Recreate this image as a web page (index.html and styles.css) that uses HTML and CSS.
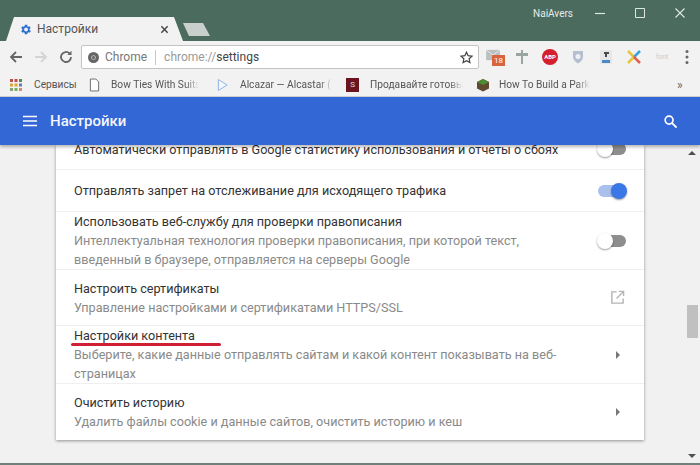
FILE: index.html
```html
<!DOCTYPE html>
<html lang="ru">
<head>
<meta charset="utf-8">
<title>Настройки</title>
<link rel="stylesheet" href="styles.css">
</head>
<body>
<div class="window">
  <div class="titlebar">
    <div class="tab">
      <svg class="tab-icon" viewBox="0 0 24 24"><path fill="#2f6fd0" d="M19.400 13a7.500 7.500 0 0 0 0-2l2.100-1.600-2-3.400-2.500 1a7.600 7.600 0 0 0-1.700-1L15.300 3.300h-4.600l-.4 2.700a7.600 7.600 0 0 0-1.700 1l-2.500-1-2 3.400L6.200 11a7.500 7.500 0 0 0 0 2l-2.100 1.600 2 3.400 2.500-1a7.600 7.600 0 0 0 1.700 1l.4 2.700h4.600l.4-2.700a7.600 7.600 0 0 0 1.700-1l2.500 1 2-3.400zM13 15.500a3.500 3.500 0 1 1 0-7 3.500 3.500 0 0 1 0 7z"/></svg>
      <span class="tab-title">Настройки</span>
      <svg class="tab-close" viewBox="0 0 10 10"><path d="M1.500 1.500l7 7M8.500 1.500l-7 7" stroke="#444" stroke-width="1.600" fill="none"/></svg>
    </div>
    <div class="newtab"></div>
    <div class="title-spacer"></div>
    <span class="user">NaiAvers</span>
    <div class="winctl">
      <svg viewBox="0 0 12 12"><path d="M1 6.500h10" stroke="#dfe8e4" stroke-width="1.200"/></svg>
      <svg viewBox="0 0 12 12"><path d="M1.500 1.500h9v9h-9z" stroke="#dfe8e4" stroke-width="1" fill="none"/></svg>
      <svg viewBox="0 0 12 12"><path d="M1.500 1.500l9 9M10.500 1.500l-9 9" stroke="#dfe8e4" stroke-width="1.100"/></svg>
    </div>
  </div>
  <div class="toolbar">
    <svg class="nav" viewBox="0 0 16 16"><path d="M14 8H3M8 3L3 8l5 5" stroke="#666" stroke-width="1.800" fill="none"/></svg>
    <svg class="nav" viewBox="0 0 16 16"><path d="M2 8h11M8 3l5 5-5 5" stroke="#d4d4d4" stroke-width="1.800" fill="none"/></svg>
    <svg class="nav" viewBox="0 0 16 16"><path d="M13 8a5 5 0 1 1-1.500-3.600" stroke="#666" stroke-width="1.800" fill="none"/><path d="M13.500 1.800v4.200H9.300z" fill="#666"/></svg>
    <div class="omnibox">
      <span class="site-icon"></span>
      <span class="chip">Chrome</span>
      <span class="omni-sep"></span>
      <span class="url"><span class="url-dim">chrome://</span>settings</span>
      <svg class="star" viewBox="0 0 24 24"><path d="M12 3.500l2.600 5.600 6.100.7-4.500 4.200 1.200 6L12 17l-5.400 3 1.200-6-4.500-4.200 6.100-.7z" stroke="#444" stroke-width="2" fill="none"/></svg>
    </div>
    <div class="exts">
      <span class="ext ext-mail"><svg viewBox="0 0 16 14"><path d="M0 1h16v12H0z" fill="#b9c0c0"/><path d="M0 1l8 6 8-6" stroke="#eee" fill="none"/></svg><span class="badge">18</span></span>
      <svg class="ext" viewBox="0 0 16 16"><path d="M7 1h2v3h5v3H9v8H7V7H2V4h5z" fill="#9aa5a2"/></svg>
      <span class="ext abp">ABP</span>
      <svg class="ext" viewBox="0 0 16 16"><path d="M3 2h10v6c0 3-2.500 5-5 6.500C5.500 13 3 11 3 8z" fill="#b5bfd0"/><circle cx="8" cy="7.500" r="2.500" fill="#eef0f3"/></svg>
      <svg class="ext" viewBox="0 0 16 16"><path d="M2 1h12v14H2z" fill="#e6e6e6"/><path d="M6 3h5v2H9v3H7V5H6z" fill="#4a4a4a"/><path d="M4 11h8v3H4z" fill="#4a8ac8"/></svg>
      <svg class="ext" viewBox="0 0 16 16"><path d="M2 2l6 6-6 6" stroke="#e8c43c" stroke-width="2.500" fill="none"/><path d="M14 2L8 8" stroke="#3aa4d8" stroke-width="2.500"/><path d="M14 14L8 8" stroke="#e0604c" stroke-width="2.500"/></svg>
      <span class="ext ext-text">font</span>
    </div>
    <svg class="menu-dots" viewBox="0 0 4 16"><circle cx="2" cy="2.500" r="1.500"/><circle cx="2" cy="8" r="1.500"/><circle cx="2" cy="13.500" r="1.500"/></svg>
  </div>
  <div class="bookmarks">
    <svg class="bm-apps" viewBox="0 0 12 12"><g fill="#c0504c"><rect width="3" height="3"/><rect x="4.500" width="3" height="3"/></g><rect x="9" width="3" height="3" fill="#5a8a5c"/><g fill="#d8a83c"><rect y="4.500" width="3" height="3"/><rect x="4.500" y="4.500" width="3" height="3"/></g><rect x="9" y="4.500" width="3" height="3" fill="#6a7ab8"/><g fill="#7ca86a"><rect y="9" width="3" height="3"/><rect x="4.500" y="9" width="3" height="3"/></g><rect x="9" y="9" width="3" height="3" fill="#d88a6c"/></svg>
    <span class="bm bm-services">Сервисы</span>
    <svg class="bm-icon bm-doc" viewBox="0 0 12 14"><path d="M1.500.5h6l3 3v10h-9z" stroke="#666" fill="#fff"/></svg>
    <span class="bm fade bm-bow">Bow Ties With Suits</span>
    <svg class="bm-icon bm-play" viewBox="0 0 12 14"><path d="M1.500 1l9.500 6-9.500 6z" stroke="#8aaee0" fill="#f4f7fc"/></svg>
    <span class="bm fade bm-alc">Alcazar — Alcastar (</span>
    <span class="bm-s">S</span>
    <span class="bm fade bm-sell">Продавайте готовы</span>
    <svg class="bm-icon bm-cube" viewBox="0 0 12 14"><path d="M6 1l6 3v6.500L6 13.500 0 10.500V4z" fill="#5f4a30"/><path d="M6 1l6 3-6 3-6-3z" fill="#4f8a34"/></svg>
    <span class="bm fade bm-park">How To Build a Park</span>
    <span class="bm-more">»</span>
  </div>
  <header class="appbar">
    <svg class="hamburger" viewBox="0 0 14 12"><path d="M0 1.500h14M0 6h14M0 10.500h14" stroke="#fff" stroke-width="1.600"/></svg>
    <span class="app-title">Настройки</span>
    <svg class="search" viewBox="0 0 16 16"><circle cx="6.500" cy="6.500" r="4.200" stroke="#fff" stroke-width="1.800" fill="none"/><path d="M9.700 9.700l4.800 4.800" stroke="#fff" stroke-width="2"/></svg>
  </header>
  <main class="content">
    <div class="page">
      <div class="card">
        <div class="row row-cut">
          <div class="row-text"><div class="label">Автоматически отправлять в Google статистику использования и отчеты о сбоях</div></div>
          <span class="toggle"><span class="knob"></span></span>
        </div>
        <div class="row row-single">
          <div class="row-text"><div class="label">Отправлять запрет на отслеживание для исходящего трафика</div></div>
          <span class="toggle on"><span class="knob"></span></span>
        </div>
        <div class="row row-triple">
          <div class="row-text">
            <div class="label">Использовать веб-службу для проверки правописания</div>
            <div class="sub">Интеллектуальная технология проверки правописания, при которой текст, введенный в браузере, отправляется на серверы Google</div>
          </div>
          <span class="toggle"><span class="knob"></span></span>
        </div>
        <div class="row row-double">
          <div class="row-text">
            <div class="label">Настроить сертификаты</div>
            <div class="sub">Управление настройками и сертификатами HTTPS/SSL</div>
          </div>
          <svg class="ext-link" viewBox="0 0 16 16"><path d="M7 2H2v12h12V9" stroke="#b4b4b4" stroke-width="1.500" fill="none"/><path d="M7 9l7-7M9.500 1.500h5v5" stroke="#b4b4b4" stroke-width="1.500" fill="none"/></svg>
        </div>
        <div class="row row-triple">
          <div class="row-text">
            <div class="label">Настройки контента</div>
            <div class="sub">Выберите, какие данные отправлять сайтам и какой контент показывать на веб-страницах</div>
            <span class="red-line"></span>
          </div>
          <span class="arrow"></span>
        </div>
        <div class="row row-double">
          <div class="row-text">
            <div class="label">Очистить историю</div>
            <div class="sub">Удалить файлы cookie и данные сайтов, очистить историю и кеш</div>
          </div>
          <span class="arrow"></span>
        </div>
      </div>
    </div>
    <div class="scrollbar">
      <span class="sb-up"></span>
      <span class="sb-thumb"></span>
      <span class="sb-down"></span>
    </div>
  </main>
</div>
</body>
</html>
```
FILE: styles.css
```css
* { box-sizing: border-box; }
html, body { margin: 0; padding: 0; }
body { width: 700px; height: 465px; overflow: hidden; font-family: Roboto, "Noto Sans", sans-serif; background: #f1f1f1; }
.window { width: 700px; height: 465px; display: flex; flex-direction: column; border-bottom: 2px solid #6f7f79; }

.titlebar { height: 41px; flex: none; background: #4a6b5e; display: flex; align-items: flex-start; padding-left: 6px; }
.tab { margin-top: 17px; width: 177px; height: 24px; background: #f2f2f2; clip-path: polygon(0 100%, 8px 0, 168px 0, 177px 100%); display: flex; align-items: center; padding-left: 13px; padding-right: 14px; }
.tab-icon { width: 13px; height: 13px; flex: none; }
.tab-title { margin-left: 5px; font-size: 12px; color: #555; flex: 1; }
.tab-close { width: 9px; height: 9px; flex: none; }
.newtab { margin-top: 23px; margin-left: 0; width: 27px; height: 13px; background: #c9cfcd; clip-path: polygon(0 0, 20px 0, 100% 100%, 6px 100%); }
.title-spacer { flex: 1; }
.user { margin-top: 8px; font-size: 10px; color: #e6ecea; margin-right: 21px; }
.winctl { display: flex; gap: 28px; margin-top: 7px; padding-right: 14px; }
.winctl svg { width: 12px; height: 12px; }

.toolbar { height: 32px; flex: none; background: #f2f2f2; display: flex; align-items: center; padding-left: 8px; }
.nav { width: 16px; height: 16px; flex: none; margin-right: 9px; }
.omnibox { width: 398px; height: 24px; margin-left: -2px; background: #fff; border: 1px solid #c4c4c4; border-radius: 2px; display: flex; align-items: center; padding-left: 6px; }
.site-icon { width: 11px; height: 11px; border-radius: 50%; background: #666; border: 3px solid #666; box-shadow: inset 0 0 0 1px #bbb; flex: none; }
.chip { margin-left: 6px; font-size: 12px; color: #777; }
.omni-sep { width: 1px; height: 15px; background: #c8c8c8; margin: 0 8px; }
.url { font-size: 12px; color: #444; flex: 1; }
.url-dim { color: #9a9a9a; }
.star { width: 15px; height: 15px; margin-right: 4px; flex: none; }
.exts { display: flex; align-items: center; gap: 12px; margin-left: 7px; }
.ext { width: 16px; height: 16px; flex: none; display: block; }
.ext-mail { position: relative; }
.ext-mail svg { width: 14px; height: 12px; display: block; }
.badge { position: absolute; left: 6px; top: 6px; width: 13px; height: 11px; background: #d9623f; color: #fff; font-size: 8px; line-height: 11px; text-align: center; }
.abp { border-radius: 50%; background: #d3202c; color: #fff; font-size: 6px; font-weight: 700; line-height: 16px; text-align: center; }
.ext-text { font-size: 7px; line-height: 16px; color: #c5cdd0; text-align: center; }
.menu-dots { width: 4px; height: 16px; margin-left: 15px; fill: #666; flex: none; }

.bookmarks { height: 24px; flex: none; background: #f2f2f2; border-bottom: 1px solid #d0d0d0; display: flex; align-items: center; padding-left: 10px; font-size: 10.200px; color: #555; white-space: nowrap; }
.bm-apps { width: 12px; height: 12px; flex: none; margin-right: 12px; }
.bm { display: block; flex: none; }
.fade { -webkit-mask-image: linear-gradient(to right, #000 85%, transparent); mask-image: linear-gradient(to right, #000 85%, transparent); }
.bm-services { width: 41px; }
.bm-icon { width: 11px; height: 14px; flex: none; }
.bm-doc { margin-left: 14px; margin-right: 11px; }
.bm-play { margin-left: 18px; margin-right: 12px; }
.bm-cube { width: 12px; margin-left: 14px; margin-right: 10px; }
.bm-bow { width: 88px; }
.bm-alc { width: 93px; }
.bm-s { width: 13px; height: 14px; background: #6b1420; color: #ddd; font-size: 8px; line-height: 14px; text-align: center; margin-left: 13px; margin-right: 11px; flex: none; }
.bm-sell { width: 93px; }
.bm-park { width: 91px; }
.bm-more { margin-left: 87px; color: #666; font-size: 12px; }

.appbar { height: 48px; flex: none; background: #3367d6; display: flex; align-items: center; padding-left: 23px; padding-right: 22px; position: relative; z-index: 2; box-shadow: 0 2px 3px rgba(0,0,0,.28); }
.hamburger { width: 14px; height: 12px; flex: none; }
.app-title { margin-left: 13px; font-size: 15px; font-weight: 500; color: #f4f6fc; flex: 1; }
.search { width: 15px; height: 15px; flex: none; }

.content { flex: 1; min-height: 0; display: flex; background: #f1f1f1; overflow: hidden; }
.page { flex: 1; padding-left: 56px; padding-right: 41px; }
.card { width: 588px; height: 295px; background: #fff; box-shadow: 0 1px 3px rgba(0,0,0,.4); display: flex; flex-direction: column; }
.row { display: flex; align-items: center; padding-left: 18px; padding-right: 18px; border-bottom: 1px solid #efefef; flex: none; }
.row:last-child { border-bottom: 0; }
.row-cut { align-items: flex-start; margin-top: -5px; height: 30px; }
.row-single { height: 42px; }
.row-triple { height: 58px; }
.row-double { height: 56px; }
.row-text { flex: 1; min-width: 0; position: relative; }
.label { font-size: 12.640px; line-height: 19px; color: #333; white-space: nowrap; }
.sub { font-size: 12.640px; line-height: 19px; color: #8a8a8a; max-width: 490px; }

.toggle { width: 28px; height: 12px; flex: none; position: relative; background: #8e8e8e; border-radius: 6px; }
.knob { position: absolute; left: -1px; top: -2px; width: 16px; height: 16px; border-radius: 50%; background: #fff; box-shadow: 0 1px 2px rgba(0,0,0,.4); }
.toggle.on { background: #a9c0ee; }
.toggle.on .knob { left: auto; right: -1px; background: #3b78e7; }
.row-cut .toggle { margin-top: 3px; }

.ext-link { width: 15px; height: 15px; flex: none; margin-right: 1px; }
.arrow { width: 0; height: 0; border-left: 4px solid #777; border-top: 4px solid transparent; border-bottom: 4px solid transparent; flex: none; margin-right: 6px; }
.red-line { position: absolute; left: -3px; top: 17px; width: 150px; height: 3px; border-radius: 2px; background: #cf1f33; }

.scrollbar { width: 15px; flex: none; background: #f1f1f1; position: relative; }
.sb-up { position: absolute; left: 3px; top: 6px; border: 4px solid transparent; border-top: 0; border-bottom: 4px solid #505050; }
.sb-down { position: absolute; left: 3px; bottom: 5px; border: 4px solid transparent; border-bottom: 0; border-top: 4px solid #505050; }
.sb-thumb { position: absolute; left: 2px; top: 160px; width: 11px; height: 33px; background: #c0c0c0; }
```
